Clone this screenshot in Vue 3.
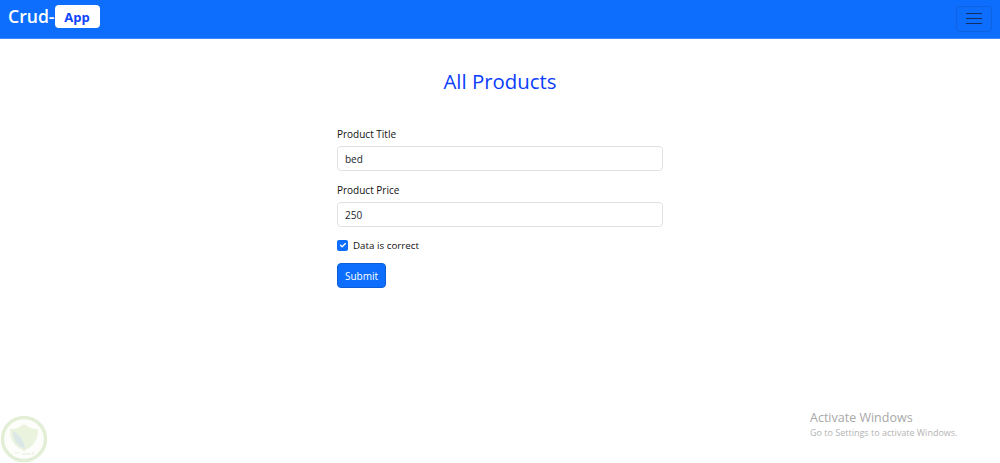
<template>
  <div class="page">
    <nav class="navbar">
      <a class="brand">Crud-<span class="brand-badge">App</span></a>
      <button class="toggler" type="button" aria-label="Toggle navigation">
        <span></span>
        <span></span>
        <span></span>
      </button>
    </nav>

    <main class="content">
      <h1 class="title">All Products</h1>
      <form class="form" @submit.prevent>
        <div class="field">
          <label class="label" for="title">Product Title</label>
          <input id="title" v-model="title" class="input" type="text" />
        </div>
        <div class="field">
          <label class="label" for="price">Product Price</label>
          <input id="price" v-model="price" class="input" type="text" />
        </div>
        <label class="check">
          <span class="checkbox">
            <svg width="8" height="8" viewBox="0 0 20 20">
              <path d="M4 10.5l4 4 8-8" fill="none" stroke="#fff" stroke-width="3.4" stroke-linecap="round" stroke-linejoin="round" />
            </svg>
          </span>
          Data is correct
        </label>
        <button class="submit" type="submit">Submit</button>
      </form>
    </main>

    <svg class="seal" width="48" height="48" viewBox="0 0 48 48">
      <circle cx="24" cy="24" r="21.5" fill="#fdfefb" stroke="#e3eed6" stroke-width="3.5" />
      <path d="M10 14c6 0 10-2 14-5 4 3 8 5 14 5 0 11-4 17-14 22C14 31 10 25 10 14z" fill="#eaf3de" />
      <path d="M13 16c6 3 11 9 12 18-8-3-12-9-12-18z" fill="#dbe7e6" />
      <path d="M15 38h4M22 39h9M33 37v3" fill="none" stroke="#e6ecdc" stroke-width="1" />
    </svg>

    <div class="activate">
      <div class="activate-title">Activate Windows</div>
      <div class="activate-sub">Go to Settings to activate Windows.</div>
    </div>
  </div>
</template>

<script setup>
import { ref } from 'vue'

const title = ref('bed')
const price = ref('250')
</script>

<style>
html,
body {
  margin: 0;
  background: #fff;
}
</style>

<style scoped>
.page {
  position: relative;
  height: 463px;
  overflow: hidden;
  font-family: "Open Sans", "Noto Sans", sans-serif;
  color: #212529;
}

.navbar {
  display: flex;
  align-items: center;
  justify-content: space-between;
  box-sizing: border-box;
  height: 39px;
  padding: 0 8px;
  background: #0d6efd;
  border-bottom: 1px solid #3d8bfd;
}

.brand {
  display: flex;
  align-items: center;
  margin-top: -6px;
  font-size: 17.6px;
  font-weight: 600;
  color: #fff;
}

.brand-badge {
  display: flex;
  align-items: center;
  justify-content: center;
  width: 45px;
  height: 23px;
  margin-top: 1px;
  background: #fff;
  border-radius: 4px;
  font-size: 13px;
  font-weight: 700;
  color: #0d44fd;
}

.toggler {
  display: flex;
  flex-direction: column;
  align-items: center;
  justify-content: center;
  gap: 4px;
  box-sizing: border-box;
  width: 36px;
  height: 26px;
  margin-top: -1px;
  padding: 0;
  background: transparent;
  border: 1px solid #0f62e0;
  border-radius: 4px;
}

.toggler span {
  width: 16px;
  height: 1px;
  background: #10305f;
}

.content {
  display: flex;
  flex-direction: column;
  align-items: center;
  padding-top: 29px;
}

.title {
  margin: 0;
  font-size: 20.4px;
  line-height: 27px;
  font-weight: 500;
  color: #0a3dfd;
}

.form {
  display: flex;
  flex-direction: column;
  width: 326px;
  margin-top: 31px;
}

.field {
  margin-bottom: 11px;
}

.label {
  display: block;
  margin-bottom: 4px;
  font-size: 10px;
  line-height: 16px;
  color: #111;
}

.input {
  display: block;
  box-sizing: border-box;
  width: 100%;
  height: 25px;
  padding: 0 7px;
  font-family: inherit;
  font-size: 10px;
  color: #212529;
  background: #fff;
  border: 1px solid #dee2e6;
  border-radius: 4px;
  outline: none;
}

.check {
  display: flex;
  align-items: center;
  gap: 5px;
  height: 16px;
  margin-top: -1px;
  font-size: 9.8px;
  color: #111;
}

.checkbox {
  display: flex;
  align-items: center;
  justify-content: center;
  width: 11px;
  height: 11px;
  background: #0d6efd;
  border-radius: 2px;
}

.submit {
  width: 49px;
  height: 25px;
  margin-top: 10px;
  padding: 0;
  font-family: inherit;
  font-size: 10px;
  color: #fff;
  background: #0d6efd;
  border: 1px solid #0b5ed7;
  border-radius: 4px;
}

.seal {
  position: absolute;
  left: 0;
  bottom: 0;
}

.activate {
  position: absolute;
  left: 810px;
  top: 410px;
}

.activate-title {
  font-size: 12.5px;
  line-height: 16px;
  color: #a8a8a8;
}

.activate-sub {
  font-size: 9px;
  line-height: 14px;
  color: #b4b4b4;
}
</style>
